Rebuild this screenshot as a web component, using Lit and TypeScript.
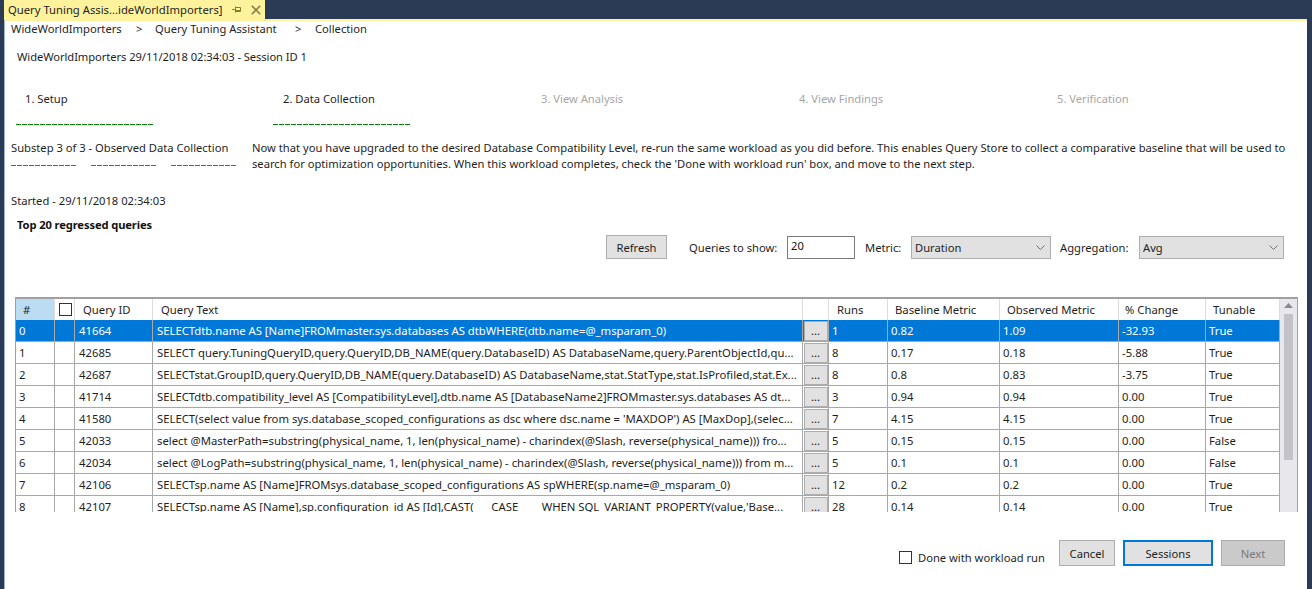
import { LitElement, html, css } from "lit";
import { customElement } from "lit/decorators.js";

const rows = [
  ["0","41664","SELECTdtb.name AS [Name]FROMmaster.sys.databases AS dtbWHERE(dtb.name=@_msparam_0)","1","0.82","1.09","-32.93","True"],
  ["1","42685","SELECT query.TuningQueryID,query.QueryID,DB_NAME(query.DatabaseID) AS DatabaseName,query.ParentObjectId,qu...","8","0.17","0.18","-5.88","True"],
  ["2","42687","SELECTstat.GroupID,query.QueryID,DB_NAME(query.DatabaseID) AS DatabaseName,stat.StatType,stat.IsProfiled,stat.Ex...","8","0.8","0.83","-3.75","True"],
  ["3","41714","SELECTdtb.compatibility_level AS [CompatibilityLevel],dtb.name AS [DatabaseName2]FROMmaster.sys.databases AS dt...","3","0.94","0.94","0.00","True"],
  ["4","41580","SELECT(select value from sys.database_scoped_configurations as dsc where dsc.name = 'MAXDOP') AS [MaxDop],(selec...","7","4.15","4.15","0.00","True"],
  ["5","42033","select @MasterPath=substring(physical_name, 1, len(physical_name) - charindex(@Slash, reverse(physical_name))) fro...","5","0.15","0.15","0.00","False"],
  ["6","42034","select @LogPath=substring(physical_name, 1, len(physical_name) - charindex(@Slash, reverse(physical_name))) from m...","5","0.1","0.1","0.00","False"],
  ["7","42106","SELECTsp.name AS [Name]FROMsys.database_scoped_configurations AS spWHERE(sp.name=@_msparam_0)","12","0.2","0.2","0.00","True"],
  ["8","42107","SELECTsp.name AS [Name],sp.configuration_id AS [Id],CAST(\u00a0\u00a0\u00a0\u00a0\u00a0\u00a0CASE\u00a0\u00a0\u00a0\u00a0\u00a0\u00a0\u00a0\u00a0WHEN SQL_VARIANT_PROPERTY(value,'Base...","28","0.14","0.14","0.00","True"],
];

const chevron = html`<svg class="chev" width="9" height="5" viewBox="0 0 9 5"><path d="M0.5 0.5 L4.5 4.5 L8.5 0.5" fill="none" stroke="#707070" stroke-width="1"/></svg>`;

@customElement("app-root")
export class AppRoot extends LitElement {
  static styles = css`
    :host { display: block; width: 1312px; height: 589px; overflow: hidden; background: #2b3a55;
      font-family: "Noto Sans", "Open Sans", sans-serif; font-size: 11.2px; color: #1e1e1e; }
    .tabbar { height: 19px; padding-left: 4px; display: flex; }
    .tab { width: 261px; background: #fff29d; display: flex; align-items: center; padding-left: 4px; box-sizing: border-box; font-size: 11.25px; white-space: nowrap; color:#1e1e1e; }
    .tab .t { width: 218px; }
    .tab svg { display:block; }
    .pin { margin-left: 6px; }
    .close { margin-left: 10px; }
    .main { margin-left: 4px; margin-right: 5px; height: 570px; background: #fff; box-sizing: border-box;
      border-top: 2px solid #fff29d; border-left: 1px solid #9fb3d8; overflow: hidden; display:flex; flex-direction: column; }
    .crumbs { height: 16px; display: flex; align-items: center; padding-left: 6px; margin-top: -1px; flex: none; }
    .crumbs span { white-space: nowrap; }
    .c1 { width: 125px; }
    .c2 { width: 19px; }
    .c3 { width: 140px; }
    .c4 { width: 20px; }
    .title { height: 16px; margin-top: 12px; padding-left: 12px; display:flex; align-items:center; flex: none; letter-spacing: -0.075px; }
    .steps { display: grid; grid-template-columns: repeat(5, 258px); margin-top: 27px; padding-left: 11px; height: 38px; flex: none; }
    .step { padding-left: 9px; line-height: 16px; }
    .step.off { color: #a6a6a6; }
    .step .gline { height: 1px; margin: 17px 0 0 -9px; width: 138px; background: repeating-linear-gradient(90deg, #0a7d0a 0 5px, transparent 5px 6px); }
    .step:nth-child(2) .gline { margin-left: -10px; }
    .sub { display: grid; grid-template-columns: 241px 1fr; padding-left: 6px; margin-top: 11px; height: 34px; flex: none; }
    .sub .l { white-space: nowrap; line-height: 16px; }
    .blues { display: flex; gap: 15px; margin-top: 9px; }
    .bline { height: 1px; width: 65px; background: repeating-linear-gradient(90deg, #1a72c4 0 5px, transparent 5px 6px); }
    .desc { line-height: 16px; white-space: nowrap; }
    .started { margin-top: 19px; padding-left: 6px; height: 16px; line-height: 16px; flex: none; }
    .top { margin-top: 8px; padding-left: 12px; height: 16px; line-height: 16px; font-weight: 700; color: #111; letter-spacing: -0.12px; flex: none; }
    .toolbar { display: flex; align-items: center; height: 24px; margin-top: 2px; padding-left: 601px; flex: none; }
    .btn { background: #e1e1e1; border: 1px solid #adadad; box-sizing: border-box; display:flex; align-items:center; justify-content:center; }
    .refresh { width: 61px; height: 24px; }
    .lbl { white-space: nowrap; flex: none; }
    .l1 { margin-left: 22px; width: 98px; }
    .l2 { margin-left: 10px; width: 46px; }
    .l3 { margin-left: 9px; width: 79px; }
    .input { width: 68px; height: 23px; border: 1px solid #7a7a7a; box-sizing: border-box; padding: 0 0 4px 3px; display:flex; align-items:center; color:#111; }
    .select { height: 23px; background: #e1e1e1; border: 1px solid #adadad; box-sizing: border-box; display:flex; align-items:center; justify-content: space-between; padding: 0 5px 0 3px; }
    .m { width: 140px; }
    .a { width: 145px; }
    .tablewrap { margin: 38px 0 0 10px; width: 1283px; height: 215px; flex: none; box-sizing: border-box; border-top: 2px solid #a0a0a0; border-left: 1px solid #a0a0a0; border-right: 1px solid #a0a0a0; background:#fff; display: flex; overflow: hidden; }
    .grid { width: 1264px; flex: none; font-size: 11.3px; }
    .r { display: grid; grid-template-columns: 39px 20px 78px 650px 26px 59px 112px 119px 87px 74px; height: 22px; box-sizing: border-box; border-bottom: 1px solid #a8a8a8; }
    .r > div { padding-left: 3px; white-space: nowrap; overflow: hidden; border-right: 1px solid #a8a8a8; line-height: 21px; box-sizing: border-box; }
    .r > div:nth-child(3), .r > div:nth-child(4) { padding-left: 4px; }
    .r.h { height: 21px; border-bottom: none; }
    .r.h > div { border-right: 1px solid #dcdcdc; padding-left: 7px; line-height: 21px; background: #fff; }
    .r.h > div:nth-child(1) { background: #bcdcf4; padding-left: 7px; }
    .r.h > div:nth-child(2) { display:flex; align-items:center; padding-left: 4px; }
    .r.h > div:nth-child(3), .r.h > div:nth-child(4), .r.h > div:nth-child(6) { padding-left: 8px; }
    .r.h > div:nth-child(9) { padding-left: 6px; }
    .r.h > div:nth-child(10) { padding-left: 7px; }
    .r.sel { background: #0078d7; color: #fff; }
    .box { width: 13px; height: 13px; border: 1px solid #333; box-sizing: border-box; background: #fff; display: block; flex: none; }
    .r > div.more { padding: 0; display: flex; align-items: center; justify-content: center; }
    .mbtn { width: 24px; height: 20px; background: #e1e1e1; border: 1px solid #adadad; box-sizing: border-box; text-align: center; line-height: 18px; color: #111; }
    .scroll { flex: 1; background: #e8e8ec; display:flex; flex-direction: column; align-items:center; }
    .thumb { width: 9px; height: 146px; margin-top: 6px; background: #c2c3c9; }
    .arrow { margin-top: 4px; display: block; }
    .foot { display: flex; align-items: flex-start; height: 26px; margin-top: 28px; padding-left: 894px; flex: none; }
    .foot .box { margin-top: 11px; }
    .foot .lab { margin: 10px 0 0 6px; width: 141px; white-space: nowrap; line-height: 16px; }
    .cancel { width: 56px; height: 26px; }
    .sessions { width: 90px; height: 26px; margin-left: 8px; border: 2px solid #0078d7; }
    .next { width: 64px; height: 26px; margin-left: 8px; background: #cacaca; color: #7a7a7a; }
  `;

  render() {
    return html`
      <div class="tabbar">
        <div class="tab"><span class="t">Query Tuning Assis...ideWorldImporters]</span>
          <svg class="pin" width="9" height="9" viewBox="0 0 9 9"><path d="M0 4.5H3M3.5 1.5V7.5M3.5 2.5H8.5V6.5H3.5M3.5 5.5H8.5" fill="none" stroke="#8a7a30" stroke-width="1"/></svg>
          <svg class="close" width="10" height="10" viewBox="0 0 10 10"><path d="M0.7 0.7L9.3 9.3M9.3 0.7L0.7 9.3" stroke="#8a7f50" stroke-width="1.6"/></svg>
        </div>
      </div>
      <div class="main">
        <div class="crumbs">
          <span class="c1">WideWorldImporters</span><span class="c2">&gt;</span><span class="c3">Query Tuning Assistant</span><span class="c4">&gt;</span><span>Collection</span>
        </div>
        <div class="title">WideWorldImporters 29/11/2018 02:34:03 - Session ID 1</div>
        <div class="steps">
          <div class="step">1. Setup<div class="gline"></div></div>
          <div class="step">2. Data Collection<div class="gline"></div></div>
          <div class="step off">3. View Analysis</div>
          <div class="step off">4. View Findings</div>
          <div class="step off">5. Verification</div>
        </div>
        <div class="sub">
          <div class="l">Substep 3 of 3 - Observed Data Collection
            <div class="blues"><div class="bline"></div><div class="bline"></div><div class="bline"></div></div>
          </div>
          <div class="desc">Now that you have upgraded to the desired Database Compatibility Level, re-run the same workload as you did before. This enables Query Store to collect a comparative baseline that will be used to<br>search for optimization opportunities. When this workload completes, check the 'Done with workload run' box, and move to the next step.</div>
        </div>
        <div class="started">Started - 29/11/2018 02:34:03</div>
        <div class="top">Top 20 regressed queries</div>
        <div class="toolbar">
          <div class="btn refresh">Refresh</div>
          <span class="lbl l1">Queries to show:</span>
          <div class="input">20</div>
          <span class="lbl l2">Metric:</span>
          <div class="select m"><span>Duration</span>${chevron}</div>
          <span class="lbl l3">Aggregation:</span>
          <div class="select a"><span>Avg</span>${chevron}</div>
        </div>
        <div class="tablewrap">
          <div class="grid">
            <div class="r h">
              <div>#</div><div><span class="box"></span></div><div>Query ID</div><div>Query Text</div><div></div><div>Runs</div><div>Baseline Metric</div><div>Observed Metric</div><div>% Change</div><div>Tunable</div>
            </div>
            ${rows.map((r, i) => html`
              <div class="r ${i === 0 ? "sel" : ""}">
                <div>${r[0]}</div><div></div><div>${r[1]}</div><div>${r[2]}</div>
                <div class="more"><div class="mbtn">...</div></div>
                <div>${r[3]}</div><div>${r[4]}</div><div>${r[5]}</div><div>${r[6]}</div><div>${r[7]}</div>
              </div>`)}
          </div>
          <div class="scroll">
            <svg class="arrow" width="9" height="5" viewBox="0 0 9 5"><path d="M0 5L4.5 0L9 5Z" fill="#8a8a90"/></svg>
            <div class="thumb"></div>
          </div>
        </div>
        <div class="foot">
          <span class="box"></span><span class="lab">Done with workload run</span>
          <div class="btn cancel">Cancel</div>
          <div class="btn sessions">Sessions</div>
          <div class="btn next">Next</div>
        </div>
      </div>
    `;
  }
}
